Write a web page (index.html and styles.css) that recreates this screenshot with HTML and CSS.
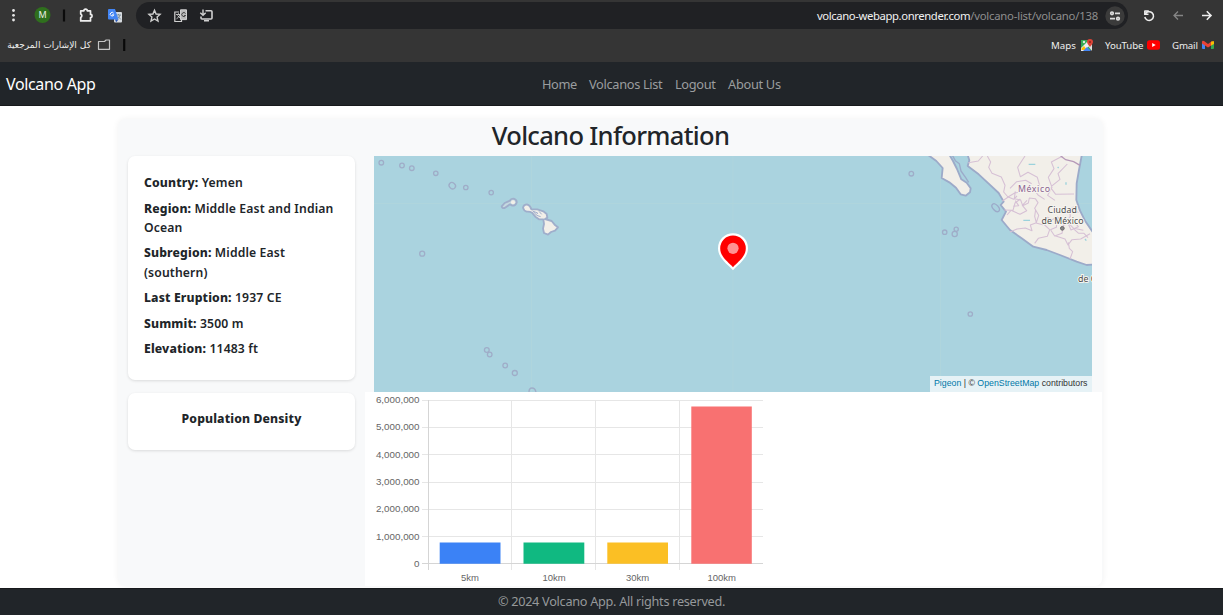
FILE: index.html
```
<!DOCTYPE html>
<html lang="en">
<head>
<meta charset="utf-8">
<title>Volcano App</title>
<link rel="stylesheet" href="styles.css">
</head>
<body>
<div class="toolbar">
  <svg class="tools" width="128" height="31" viewBox="0 0 128 31">
    <g fill="#e6e6e6"><circle cx="13.5" cy="10.5" r="1.4"/><circle cx="13.5" cy="15.3" r="1.4"/><circle cx="13.5" cy="20" r="1.4"/></g>
    <circle cx="42.5" cy="15" r="8" fill="#2f6f1d"/>
    <text x="42.5" y="18.3" text-anchor="middle" class="avatar">M</text>
    <path d="M64 9.500v12" stroke="#0b0b0b" stroke-width="2.200"/>
    <path d="M80.700 10.800h3.200a1.700 1.700 0 0 1 3.400 0h3.200v3.600a1.600 1.600 0 0 1 0 3.200v3.300h-9.800v-3.400a2 2 0 0 0 0-3.600z" fill="none" stroke="#eee" stroke-width="1.700" stroke-linejoin="round"/>
    <rect x="114" y="12" width="8" height="10.500" rx="1" fill="#d8dce0"/>
    <path d="M116 15h5m-2.500-1v1m1.600 0q-1 3-3 4m1-2.500 2.800 3" stroke="#69808a" fill="none" stroke-width=".8"/>
    <path d="M109 9h6l3.500 10.500H109a1 1 0 0 1-1-1V10a1 1 0 0 1 1-1z" fill="#4285f4"/>
    <path d="m115 19.500 3.500 0-2.300 2.800z" fill="#2856b5"/>
    <path d="M113.600 13.200a1.800 1.800 0 1 0 .2 1.600h-1.700" fill="none" stroke="#fff" stroke-width="1"/>
  </svg>
  <div class="omnibox">
    <svg width="80" height="27" viewBox="136 2 80 27" fill="none" stroke="#d0d0d0" stroke-width="1.400">
      <path d="m154.500 10.300 1.600 3.700 4 .4-3 2.700.9 4-3.500-2.100-3.500 2.100.9-4-3-2.700 4-.4z"/>
      <path d="M179 12h-4.200v9.500h6.700V19" stroke-width="1.200"/>
      <path d="M180.500 9.800h6v9.800h-6z" fill="#bbb" stroke-width="1"/>
      <path d="M176 14.500h5m-2.500-1.200v1.200m1.500 0q-1 3-3.500 4.300m1-3.300 3 3" stroke-width=".9"/>
      <path d="M185.500 13.500a2 2 0 1 0 .1 2h-1.500" stroke="#333" stroke-width=".9"/>
      <path d="M205.500 10.700h5.500a1 1 0 0 1 1 1V18a1 1 0 0 1-1 1h-9a1 1 0 0 1-1-1v-1.500M204 20.800h5" stroke-width="1.600"/><path d="M203 9.500v5.500m-2.700-2.300 2.700 2.600 2.700-2.600"/>
    </svg>
    <div class="address"><span class="host">volcano-webapp.onrender.com</span><span class="path">/volcano-list/volcano/138</span></div>
    <svg class="site" width="20" height="20" viewBox="0 0 20 20" fill="none" stroke="#dedede" stroke-width="1.700">
      <circle cx="10" cy="10" r="9.700" fill="#3b3b3b" stroke="none"/><circle cx="7" cy="7.300" r="1.300"/><path d="M10 7.300h5M5 12.700h5"/><circle cx="13" cy="12.700" r="1.300"/>
    </svg>
  </div>
  <svg class="history" width="95" height="31" viewBox="1128 0 95 31" fill="none" stroke="#eee" stroke-width="1.500">
    <path d="M1144.800 10.500v3.800h3.700M1145.200 14a4.400 4.400 0 1 1-.4 3M1144.800 11h4"/>
    <path d="M1183 15.500h-9m4-4-4 4 4 4" stroke="#858585" stroke-width="1.300"/>
    <path d="M1202 15.500h9m-4.200-4.200 4.200 4.200-4.200 4.200" stroke-width="1.600"/>
  </svg>
</div>
<div class="bookmarks">
  <span class="all" dir="rtl">كل الإشارات المرجعية</span>
  <svg width="30" height="16" viewBox="97 37 30 16" fill="none" stroke="#c4c4c4" stroke-width="1.200"><path d="M98.500 41.500h6l1.600-1.500h3.400v9.300h-11z" stroke-linejoin="round"/><path d="M124.200 39v12" stroke="#090909" stroke-width="2.200"/></svg>
  <span class="mark maps">Maps</span>
  <svg class="mapsicon" width="12" height="12" viewBox="0 0 12 12"><path fill="#34a853" d="M0 1h10v10H0z"/><path fill="#eee" d="m0 9 8-8 3 3-8 8H0z"/><path fill="#fbbc04" d="m0 10 3-3 3 4H1z"/><path fill="#4285f4" d="m2 12 4-4 4 4z"/><path fill="#ddd" d="m7 7 4-3v8z"/><circle cx="3" cy="3" r="1.200" fill="#d8eddd"/><path fill="#db4437" d="M9 8Q6 5 6 3a3 3 0 0 1 6 0q0 2-3 5z"/><circle cx="9" cy="3" r="1" fill="#8d241c"/></svg>
  <span class="mark youtube">YouTube</span>
  <svg class="yticon" width="13" height="10" viewBox="0 0 13 10"><rect width="13" height="9.500" y=".2" rx="2.500" fill="#f00"/><path d="m5.200 3 3.500 2-3.500 2z" fill="#fff"/></svg>
  <span class="mark gmail">Gmail</span>
  <svg class="gmicon" width="12" height="10" viewBox="0 0 12 10"><path fill="#4285f4" d="M0 2h3v7H1a1 1 0 0 1-1-1z"/><path fill="#34a853" d="M9 2h3v6a1 1 0 0 1-1 1H9z"/><path fill="#ea4335" d="M0 2Q0 0 2 1l4 3 4-3v4L6 7.500 0 3.500z"/><path fill="#fbbc04" d="M9 2q3-2 3 0v2L9 5.500z"/></svg>
</div>
<nav class="nav">
  <span class="brand">Volcano App</span>
  <div class="links"><span class="l1">Home</span><span class="l2">Volcanos List</span><span class="l3">Logout</span><span class="l4">About Us</span></div>
</nav>
<main>
  <section class="container">
    <h1><span>Volcano Information</span></h1>
    <div class="columns">
      <aside>
        <div class="card facts">
          <p><b>Country:</b> Yemen</p>
          <p><b>Region:</b> Middle East and Indian<br>Ocean</p>
          <p><b>Subregion:</b> Middle East<br>(southern)</p>
          <p><b>Last Eruption:</b> 1937 CE</p>
          <p><b>Summit:</b> 3500 m</p>
          <p><b>Elevation:</b> 11483 ft</p>
        </div>
        <div class="card density"><b>Population Density</b></div>
      </aside>
      <div class="visuals">
        <div class="map">
          <svg width="718" height="236" viewBox="374 156 718 236">
            <path fill="#aad3df" d="M374 156h718v236H374z"/>
            <path d="M531.500 156v236M733 156v236M940.500 156v236M374 203.500h718" stroke="#b0d6dc" stroke-width=".8"/>
            <g fill="none" stroke="#9fadc8" stroke-width="1.300">
              <circle cx="381.300" cy="162.700" r="2.300"/><circle cx="402" cy="165.500" r="2.300"/><circle cx="411.800" cy="168.200" r="2.300"/><circle cx="435.800" cy="173.300" r="2.200"/><ellipse cx="452.300" cy="185.700" rx="3.400" ry="2.900" transform="rotate(40 452.300 185.700)"/><circle cx="465.800" cy="187.500" r="2.200"/><circle cx="491.200" cy="192.600" r="2.200"/><circle cx="422.200" cy="253.700" r="2.500"/>
              <circle cx="486.800" cy="350" r="2.400"/><circle cx="489.700" cy="354.500" r="2.300"/><circle cx="505.200" cy="365.500" r="2.300"/><circle cx="514.800" cy="373" r="2.500"/><path d="M529 392q0-4 3-4 3 0 4 4"/>
              <circle cx="911.300" cy="173.700" r="2.300"/><circle cx="944.700" cy="232.200" r="2.200"/><circle cx="956.200" cy="229.200" r="2.100"/><circle cx="954.700" cy="234" r="2.600"/><circle cx="970.300" cy="314" r="2.200"/>
            </g>
            <g transform="translate(370 150) scale(.33333)" fill="#f2efe9" stroke="#9faecb" stroke-width="5.500" stroke-linejoin="round">
              <path fill="#c5d9e0" d="M395 169 404 159 420 152Q422 146 431 146 441 149 440 158 437 167 427 167L420 163 404 174Q396 176 395 169z"/>
              <circle cx="429" cy="157" r="6" stroke="none"/>
              <path d="M459 173Q461 163 471 163 481 166 484 178L502 178 520 184 530 192 532 203 525 207 545 213 554 224 564 232 555 242 543 246 534 254 522 249 519 236 522 222 520 208 507 208 496 200 486 188Q480 184 470 185 461 182 459 173z"/>
              <path fill="none" stroke-width="3" d="m488 182 12 14 12 4m-22-16 13 5-3 4m7-9 8 9"/>
            </g>
            <g transform="translate(900 150) scale(.33333)">
              <g stroke="#9caac9" stroke-width="5.500" fill="#f2efe9" stroke-linejoin="round">
                <path d="M83 14 109 33 128 54 125 84 148 97 168 113 182 133 197 137 210 127 212 115 200 98 184 88 171 57 159 33 148 14z"/>
                <path d="M202 12 208 31 203 48 236 73 266 101 296 129 311 155 302 165 318 185 305 210 330 240 365 265 400 290 440 300 480 315 530 335 560 345 600 342V270L576 243 555 212 540 182 529 150 530 100 537 60 546 12z"/>
                <ellipse cx="287" cy="173" rx="14" ry="8" transform="rotate(48 287 173)" fill="none" stroke-width="4"/>
                <path d="m156 14 10 18 12 9 5 22 14 20 9 14" fill="none" stroke-width="4"/>
              </g>
              <g stroke="#d6c0d5" stroke-width="3.200" fill="none" stroke-linejoin="round">
                <path d="m205 38 30-5 13-15m14 0 10 18-6 16 10 18 28 11 11 25-4 20 13 15 20-12 14-2M375 18l-22 34 8 28 23-13 28 15 7 25-16 12 11 16 20 13M488 18l-34 18 8 20-17 26 11 30-13 24 22 15M502 42l-28 29 6 17-26 21M452 113l15 20 55-1M346 124l-3 22 19 4 6 17 17-8 3-15 18 2 8 12-10 17 12 21-7 22M361 147l-16 12-6 22-26-1M381 151l-14 15 13 16-20 11-27-12-12 14M407 178l-3 21 5 19-18 7 5 17-20-8-25 3-21 9M408 219l20 5 12-23 16 8 16-8 12 11 22 8 15 15 29 6M439 204l-8 18 18 17-7 20-27 6-11 15M451 239l18-7 3-25m-20 33 12 18 22-8 4-24 17-6M465 257l30 10 9 18 12-16 26-2 28-16M505 277l3 18 10 10-8 22M498 216l13-17-3-18 12-10 15 18m-29 35 19-6 10 12-22 10zM520 236l16 14 16 0 12 13"/>
                <path d="m307 153 18-12 16 7 10-10m-5 14 10 15-16 2M330 115l20-20 27-4 18 10"/>
              </g>
              <path d="m482 18 15 11 24 6 19 11" stroke="#b699b8" stroke-width="4" fill="none"/>
              <path d="M386 43h20m-36 168h20M498 97v7M473 51l3 3m79 213 4 5" stroke="#9bd2dc" stroke-width="4"/>
              <circle cx="487" cy="235" r="5.500" fill="#888" stroke="#666" stroke-width="3"/>
            </g>
            <g class="maplabels"><text x="1018" y="191.500" textLength="32" class="country">México</text><text x="1047.500" y="213.200" textLength="29.500">Ciudad</text><text x="1041.500" y="223.500" textLength="42">de México</text><text x="1078" y="282.300">de G</text></g>
            <path d="M733 270.300c-4-5-15-11.500-15-22.100a15 15 0 0 1 30 0c0 10.600-11 17.100-15 22.100z" fill="#fff"/>
            <path d="M733 267.300c-4-5-12.800-10-12.800-19.100a12.800 12.800 0 0 1 25.600 0c0 9.100-8.800 14.100-12.800 19.100z" fill="red"/>
            <circle cx="733" cy="248.300" r="5.600" fill="#ff9292"/>
          </svg>
          <div class="credit"><a>Pigeon</a> | © <a>OpenStreetMap</a> contributors</div>
        </div>
        <div class="chart">
          <svg width="400" height="194" viewBox="370 392 400 194">
            <g stroke="#e6e6e6"><path d="M422 400.500h341M422 427.500h341M422 454.500h341M422 482.500h341M422 509.500h341M422 536.500h341M511.500 400v170M595.500 400v170M679.500 400v170"/></g>
            <path d="M428.500 400v170M422 563.500h341" stroke="#d5d5d5"/>
            <g><path fill="#3b82f6" d="M439.700 542.400h60.800v21.300h-60.800z"/><path fill="#10b981" d="M523.500 542.400h60.800v21.300h-60.800z"/><path fill="#fbbf24" d="M607.300 542.400h60.700v21.300h-60.700z"/><path fill="#f87171" d="M691.300 406.500h60.500v157.200h-60.500z"/></g>
            <g class="axis" text-anchor="end"><text x="419.500" y="403.300">6,000,000</text><text x="419.500" y="430.400">5,000,000</text><text x="419.500" y="457.600">4,000,000</text><text x="419.500" y="484.900">3,000,000</text><text x="419.500" y="512.100">2,000,000</text><text x="419.500" y="539.500">1,000,000</text><text x="419.500" y="566.500">0</text></g>
            <g class="axis x" text-anchor="middle"><text x="470" y="581">5km</text><text x="554" y="581">10km</text><text x="637.500" y="581">30km</text><text x="721.700" y="581">100km</text></g>
          </svg>
        </div>
      </div>
    </div>
  </section>
</main>
<footer><span>© 2024 Volcano App. All rights reserved.</span></footer>
</body>
</html>
```
FILE: styles.css
```
* { box-sizing: border-box; }
body { margin: 0; width: 1223px; height: 615px; overflow: hidden; display: flex; flex-direction: column; background: #fff; color: #212529; font-family: "Noto Sans", sans-serif; }
svg { display: block; flex: none; }
span { white-space: nowrap; }
.toolbar { height: 31px; background: #353535; display: flex; }
.tools { margin-right: 8px; }
.avatar { font-size: 9px; fill: #e8eee5; }
.omnibox { width: 992px; height: 27px; margin-top: 2px; border-radius: 14px; background: #202124; display: flex; align-items: center; }
.address { margin-left: auto; font-size: 11.3px; color: #8e8e8e; white-space: nowrap; }
.host { color: #f1f1f1; letter-spacing: -.39px; }
.path { letter-spacing: -.21px; }
.site { margin: 0 3px 0 7px; }
.bookmarks { height: 31px; background: #353535; display: flex; align-items: center; font-size: 9.7px; color: #eee; padding: 0 9px 3px 0; }
.all { width: 84px; margin: 0 6px 0 7px; font-family: "DejaVu Sans", sans-serif; font-size: 9.1px; }
.mark.maps { margin-left: auto; width: 24px; }
.mapsicon { margin-left: 6px; }
.youtube { margin-left: 12px; width: 37px; letter-spacing: -.1px; }
.yticon { margin-left: 5px; }
.gmail { margin-left: 12px; width: 25px; letter-spacing: -.15px; }
.gmicon { margin-left: 5px; }
.nav { height: 44px; background: #212529; display: flex; align-items: center; border-bottom: 1px solid #17191c; color: #9b9d9f; }
.brand { width: 542px; padding-left: 6px; color: #fff; font-size: 16px; letter-spacing: -.35px; }
.links { display: flex; gap: 12px; font-size: 12.8px; }
.l1 { width: 35px; letter-spacing: -.4px; }
.l2 { width: 74px; letter-spacing: -.33px; }
.l3 { width: 41px; letter-spacing: -.35px; }
.l4 { letter-spacing: -.3px; }
main { height: 482px; padding: 13px 120px 0 118px; overflow: hidden; }
.container { height: 467px; background: #f8f9fa; border-radius: 8px; box-shadow: 0 0 6px rgba(0,0,0,.06); }
h1 { margin: 0; height: 37px; line-height: 33px; text-align: center; font-size: 25.5px; font-weight: 500; letter-spacing: -.68px; }
.columns { display: flex; }
aside { width: 247px; padding-left: 10px; }
.card { width: 227px; background: #fff; border-radius: 7px; box-shadow: 0 1px 3px rgba(0,0,0,.12); }
.facts { height: 224px; padding: 17px 16px; font-size: 12.2px; font-weight: 600; line-height: 19.200px; letter-spacing: .14px; }
.facts p { margin: 0 0 6.400px; white-space: nowrap; }
.facts b, .density b { font-weight: 800; }
.density { height: 57px; margin-top: 13px; padding-top: 16px; text-align: center; font-size: 12.2px; letter-spacing: .14px; line-height: 20px; }
.visuals { width: 737px; }
.map { width: 718px; height: 236px; margin-left: 9px; position: relative; }
.credit { position: absolute; right: 0; bottom: 0; width: 162px; height: 16px; background: rgba(255,255,255,.7); padding-left: 4px; font: 8.780px/15px "Liberation Sans", sans-serif; color: #333; white-space: nowrap; }
.credit a { color: #0078a8; }
.maplabels { font-size: 8.8px; fill: #4d4d4d; stroke: #f6f4ef; stroke-width: 2px; paint-order: stroke; }
.country { fill: #8a6390; }
.chart { height: 194px; background: #fff; padding-left: 5px; border-radius: 0 0 7px 0; }
.axis { font: 9.8px "Liberation Sans", sans-serif; fill: #666; }
.axis.x { font-size: 9.500px; }
footer { height: 27px; background: #212529; border-top: 1px solid #17191c; color: #96999b; text-align: center; font-size: 12.7px; line-height: 25px; letter-spacing: -.28px; }
```
